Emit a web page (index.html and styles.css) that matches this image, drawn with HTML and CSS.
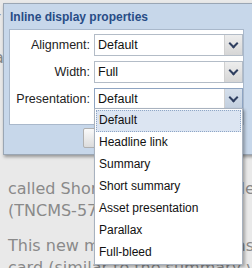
FILE: index.html
```html
<!DOCTYPE html>
<html lang="en">
<head>
    <meta charset="UTF-8">
    <title>Inline display properties</title>
    <link rel="stylesheet" href="styles.css">
</head>
<body>
    <div class="page">
        <p class="edge">r<br><br>a</p>
        <p class="para">called Short summary scalable for inline assets<br>(TNCMS-5712)</p>
        <p class="para">This new mode displays the asset as a b<br>card (similar to the summary view)</p>
    </div>

    <div class="dialog">
        <div class="dialog-title">Inline display properties</div>
        <div class="panel">
            <div class="row">
                <label>Alignment:</label>
                <div class="select"><span>Default</span><i class="arrow"></i></div>
            </div>
            <div class="row">
                <label>Width:</label>
                <div class="select"><span>Full</span><i class="arrow"></i></div>
            </div>
            <div class="row">
                <label>Presentation:</label>
                <div class="select open"><span>Default</span><i class="arrow"></i></div>
            </div>
        </div>
        <div class="buttons">
            <button>OK</button>
        </div>
    </div>

    <ul class="dropdown">
        <li class="active">Default</li>
        <li>Headline link</li>
        <li>Summary</li>
        <li>Short summary</li>
        <li>Asset presentation</li>
        <li>Parallax</li>
        <li>Full-bleed</li>
    </ul>
</body>
</html>
```

FILE: styles.css
```css
* {
    box-sizing: border-box;
    margin: 0;
    padding: 0;
}
body {
    width: 252px;
    height: 268px;
    overflow: hidden;
    background: #e9e9e9;
    font-family: 'Liberation Sans', Arial, sans-serif;
    position: relative;
}
.page {
    padding: 178px 0 0 8px;
    height: 268px;
    overflow: hidden;
    color: #8a8a8a;
    font-family: 'DejaVu Sans', Verdana, sans-serif;
    font-size: 16px;
    white-space: nowrap;
}
.edge {
    position: absolute;
    left: -6px;
    top: 8px;
    line-height: 20px;
}
.para {
    line-height: 22px;
    margin-bottom: 13px;
}
.dialog {
    position: absolute;
    left: 3px;
    top: 3px;
    width: 260px;
    height: 152px;
    background: #c7d7ea;
    border: 1px solid #9aa6b4;
    box-shadow: 1px 2px 3px rgba(0, 0, 0, 0.35);
}
.dialog-title {
    height: 25px;
    padding: 6px 0 0 6px;
    color: #284c86;
    font-weight: bold;
    font-size: 12px;
}
.panel {
    width: 235px;
    margin-left: 5px;
    height: 96px;
    background: #fff;
    border: 1px solid #a9b8cb;
    padding: 4px 0 0 0;
}
.row {
    display: flex;
    align-items: center;
    height: 22px;
    margin-bottom: 5px;
}
.row label {
    width: 84px;
    text-align: right;
    padding-right: 4px;
    font-size: 12.5px;
    color: #222;
}
.select {
    width: 149px;
    height: 22px;
    border: 1px solid #b3bcc7;
    display: flex;
    align-items: center;
    justify-content: space-between;
    font-size: 12.5px;
    color: #111;
    padding-left: 3px;
}
.arrow {
    width: 18px;
    height: 20px;
    background: linear-gradient(#ededed, #d6d6d6);
    border-left: 1px solid #d0d0d0;
    position: relative;
}
.arrow::after {
    content: "";
    position: absolute;
    left: 5px;
    top: 5px;
    width: 5px;
    height: 5px;
    border-right: 2px solid #2f3f60;
    border-bottom: 2px solid #2f3f60;
    transform: rotate(45deg);
}
.select.open {
    border-color: #8ea4c2;
}
.select.open .arrow {
    background: linear-gradient(#d5dfeb, #c2cfdf);
}
.buttons {
    padding: 3px 0 0 79px;
}
.buttons button {
    width: 60px;
    height: 20px;
    border: 1px solid #b0b0b0;
    border-radius: 2px;
    background: linear-gradient(#fafafa, #dcdcdc);
    font-family: 'Liberation Sans', sans-serif;
    font-size: 12px;
}
.dropdown {
    position: absolute;
    left: 94px;
    top: 108px;
    width: 149px;
    height: 157px;
    list-style: none;
    background: #fff;
    border: 1px solid #a8b2bf;
    box-shadow: 2px 2px 3px rgba(0, 0, 0, 0.3);
    padding: 1px;
    font-size: 12px;
    color: #111;
}
.dropdown li {
    height: 22px;
    line-height: 21px;
    padding-left: 3px;
}
.dropdown li.active {
    background: #dce5f2;
    border: 1px dotted #8ea6c6;
    padding-left: 2px;
    line-height: 19px;
}
```
